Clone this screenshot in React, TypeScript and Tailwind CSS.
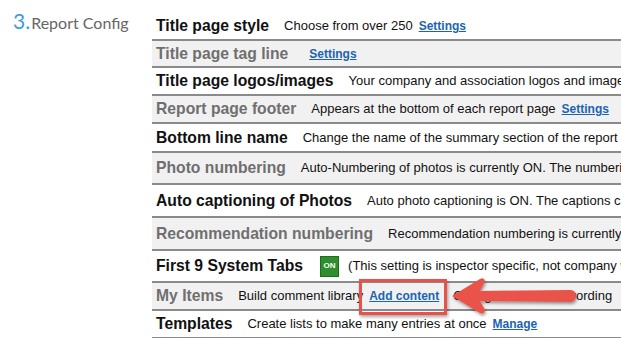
const rows = [
  { title: "Title page style", muted: false, h: "h-[28px]", desc: "Choose from over 250", link: "Settings" },
  { title: "Title page tag line", muted: true, h: "h-[27px]", desc: "", link: "Settings" },
  { title: "Title page logos/images", muted: false, h: "h-[28px]", desc: "Your company and association logos and images appear on the title page" },
  { title: "Report page footer", muted: true, h: "h-[28px]", desc: "Appears at the bottom of each report page", link: "Settings" },
  { title: "Bottom line name", muted: false, h: "h-[29px]", desc: "Change the name of the summary section of the report" },
  { title: "Photo numbering", muted: true, h: "h-[32px]", desc: "Auto-Numbering of photos is currently ON. The numbering can be changed" },
  { title: "Auto captioning of Photos", muted: false, h: "h-[33px]", desc: "Auto photo captioning is ON. The captions can be edited" },
  { title: "Recommendation numbering", muted: true, h: "h-[33px]", desc: "Recommendation numbering is currently ON" },
];

function LinkText({ children }: { children: React.ReactNode }) {
  return (
    <a href="#" className="ml-[6px] text-[12px] font-bold text-[#1d63b3] underline underline-offset-[1px]">
      {children}
    </a>
  );
}

function Row({
  title,
  muted,
  h,
  children,
}: {
  title: string;
  muted: boolean;
  h: string;
  children?: React.ReactNode;
}) {
  return (
    <div
      className={`${h} flex items-center whitespace-nowrap border-b-2 border-[#8a8a8a] pl-[4px] ${
        muted ? "bg-[#f1f1f1]" : "bg-white"
      }`}
    >
      <span className={`text-[15.7px] font-bold ${muted ? "text-[#6f6f6f]" : "text-[#111]"}`}>{title}</span>
      <span className="ml-[15px] flex items-center text-[13px] text-[#111]">{children}</span>
    </div>
  );
}

export default function App() {
  return (
    <div className="relative flex h-[338px] w-full overflow-hidden bg-white font-['Liberation_Sans',Arial,sans-serif]">
      <div className="w-[152px] shrink-0 pl-[13px] pt-[5px]">
        <div className="flex items-baseline font-['Lato',sans-serif]">
          <span className="text-[21px] text-[#3b9bdc]">3.</span>
          <span className="ml-[1px] text-[16px] text-[#666]">Report Config</span>
        </div>
      </div>

      <div className="mt-[13px] min-w-0 flex-1 overflow-hidden">
        {rows.map((r) => (
          <Row key={r.title} title={r.title} muted={r.muted} h={r.h}>
            {r.desc}
            {r.link && <LinkText>{r.link}</LinkText>}
          </Row>
        ))}

        <Row title="First 9 System Tabs" muted={false} h="h-[32px]">
          <span className="ml-[2px] mr-[9px] flex h-[21px] w-[19px] items-center justify-center border border-[#1f6e1f] bg-[#2f8f2f] text-[8px] font-bold text-white">
            ON
          </span>
          (This setting is inspector specific, not company wide)
        </Row>

        <Row title="My Items" muted={true} h="h-[28px]">
          Build comment library
          <LinkText>Add content</LinkText>
          <span className="ml-[14px]">Change the default wording</span>
        </Row>

        <Row title="Templates" muted={false} h="h-[28px]">
          Create lists to make many entries at once
          <LinkText>Manage</LinkText>
        </Row>
      </div>

      {/* callout box */}
      <div className="absolute left-[359px] top-[279px] h-[36px] w-[88px] border-[3px] border-[#e9524a] shadow-[1px_2px_3px_rgba(0,0,0,0.35)]" />

      {/* callout arrow */}
      <svg className="absolute left-[447px] top-[275px]" width="134" height="44" viewBox="0 0 134 44">
        <defs>
          <filter id="sh" x="-10%" y="-20%" width="120%" height="150%">
            <feDropShadow dx="1" dy="2" stdDeviation="1.5" floodColor="#000" floodOpacity="0.4" />
          </filter>
        </defs>
        <path
          d="M5 21 L33 4 Q37 2 38 6 L33 16 L124 15 Q129 16 129 21 Q129 26 124 27 L33 26 L38 35 Q37 40 33 38 Z"
          fill="#e9524a"
          filter="url(#sh)"
        />
      </svg>
    </div>
  );
}
